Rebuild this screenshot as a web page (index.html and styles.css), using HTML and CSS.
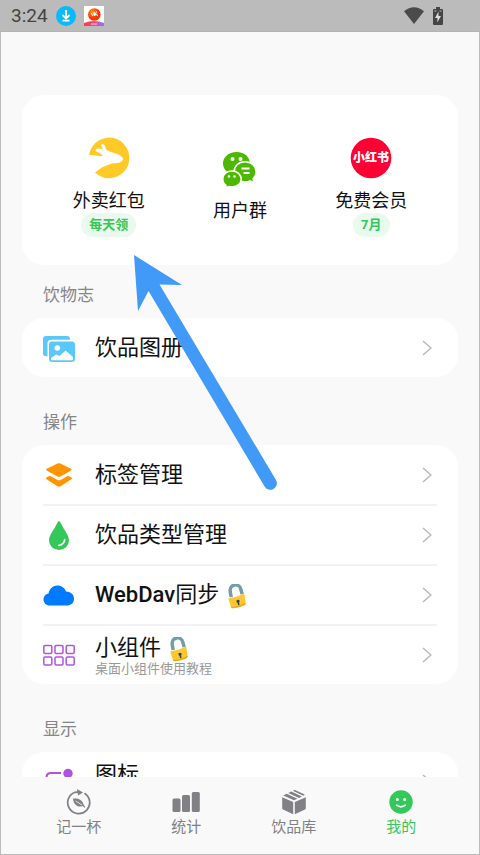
FILE: index.html
```html
<!DOCTYPE html>
<html lang="zh-CN">
<head>
<meta charset="utf-8">
<meta name="viewport" content="width=device-width, initial-scale=1">
<title>我的</title>
<link rel="stylesheet" href="styles.css">
</head>
<body>
<svg class="defs" aria-hidden="true">
  <symbol id="chevron" viewBox="0 0 10 16"><path d="M1 1l8 7-8 7" fill="none" stroke="#b9b9bc" stroke-width="1.500"/></symbol>
  <symbol id="lock" viewBox="0 0 20 26">
    <path d="M4 13.500L3 8.500C1.500-.5 12.500-1.500 14 5.500l1.300 5" fill="none" stroke="#719dab" stroke-width="3.600"/>
    <path d="M2.200 14.500Q9.500 14 16.300 10.300q1.200-.3 1.500 1l1.200 9q-.2 1.300-1.400 1.900-5.800 3.200-12.200 3-1.300-.2-1.700-1.300L1.100 15.800q-.1-1.100 1.100-1.300z" fill="#fdc82f"/>
    <path d="M3.500 23.700q8.500 0 15.300-4.200l.2 1q-.2 1.200-1.400 1.700-5.800 3.200-12.200 3-1.500-.2-1.900-1.500z" fill="#f2a623"/>
    <path d="M9.300 17.300q1.700-1.600 3.200-.4.700 1.300-.3 2.200l.4 2.700-1.400.3-.7-2.700q-1.300-.7-1.200-2.100z" fill="#35434a"/>
  </symbol>
</svg>
<div class="screen">
  <header class="status">
    <span class="time">3:24</span>
    <svg class="status-app" width="20" height="20" viewBox="0 0 20 20"><circle cx="10" cy="10" r="10" fill="#08b9fb"/><path d="M10 4v8M6.500 9l3.500 3.500L13.500 9M6.500 14.700h7" fill="none" stroke="#fff" stroke-width="1.800"/></svg>
    <svg class="status-app" width="20" height="20" viewBox="0 0 20 20">
      <defs>
        <linearGradient id="band"><stop offset="0" stop-color="#ff3c35"/><stop offset=".6" stop-color="#e44d9d"/><stop offset="1" stop-color="#747bff"/></linearGradient>
        <radialGradient id="ball" cx=".35" cy=".3"><stop offset="0" stop-color="#ff9416"/><stop offset="1" stop-color="#f83505"/></radialGradient>
      </defs>
      <path fill="#fff" d="M0 0h20v20H0z"/><path d="M0 17q10-4 20 0v3H0z" fill="url(#band)"/><circle cx="10.300" cy="8.500" r="6.300" fill="url(#ball)"/>
      <path d="M7.500 7l1 3 1.800-4 .3 4 2-4.500M11 8l3 1.500" fill="none" stroke="#fff"/><path d="M7 18h6" stroke="#fff" stroke-opacity=".7"/>
    </svg>
    <span class="status-space"></span>
    <svg width="20" height="17" viewBox="0 0 20 17"><path d="M0 4.200Q10-3.800 20 4.200L10 17z" fill="#4b4b4b"/></svg>
    <svg class="battery" width="10" height="18" viewBox="0 0 10 18"><path d="M3 0h4v2h2q1 0 1 1v14q0 1-1 1H1q-1 0-1-1V3q0-1 1-1h2z" fill="#454545"/><path d="M5.500 4.500L2 11h2.500l-.3 4.500L8 9H5.500z" fill="#ddd"/><path d="M1.500 4h2M6.500 4h2" stroke="#bbb"/></svg>
  </header>

  <main class="content">
    <section class="card shortcuts">
      <a class="shortcut" href="#coupon">
        <svg width="42" height="42" viewBox="0 0 42 42"><path d="M1 18A20.300 20.300 0 1 1 7 35.500Q15 28.500 25 26.200q8 .3 10-3.500.5-2.500-4.500-5.200-7-2-12-4.500l-2-4.800q-1.300-1.800-2.900-.7-1.200.8.200 2.200l1.200 2.400-5-.7q-3.300 0-2.300 2.600Q10 14.800 14.500 18l-.5 1.300Q8 18.500 1 18z" fill="#ffca27"/></svg>
        <span class="shortcut-name">外卖红包</span>
        <span class="pill">每天领</span>
      </a>
      <a class="shortcut" href="#group">
        <svg width="36" height="38" viewBox="0 0 36 38">
          <path d="M14.500 1C6.500 1 1 6.300 1 12.500c0 4 2 6.500 4.500 8.500L5 25l10-1 13-9.500C28.500 6 22.500 1 14.500 1z" fill="#4db800"/>
          <circle cx="10.500" cy="8" r="2" fill="#fff"/><circle cx="18.500" cy="8" r="2" fill="#fff"/>
          <path d="M23 10.800c-6.500 0-11 4.500-11 10.200S16.500 31 23 31c2 0 3.500-.3 5-1l4 1.800-.8-4c2-1.800 3-4 3-6.800 0-5.700-4.700-10.200-11.200-10.200z" fill="#4db800" stroke="#fff" stroke-width="1.600"/>
          <path d="M19.500 17.500h8M21.500 22h6" stroke="#fff" stroke-width="1.800"/>
          <path d="M10 20c-5.300 0-9.200 3.400-9.200 8 0 3 1.200 5 3.200 6.300L3.500 37l3.500-1.500q1.500.5 3 .5c5.300 0 9.200-3.500 9.200-8s-4-8-9.200-8z" fill="#4db800" stroke="#fff" stroke-width="1.500"/>
          <circle cx="7" cy="25.500" r="1.300" fill="#fff"/><circle cx="12.500" cy="25.500" r="1.300" fill="#fff"/>
        </svg>
        <span class="shortcut-name">用户群</span>
      </a>
      <a class="shortcut" href="#member">
        <svg width="42" height="42" viewBox="0 0 42 42"><circle cx="21" cy="21" r="20.300" fill="#ff0034"/><text class="logo-text" x="21" y="25" text-anchor="middle">小红书</text></svg>
        <span class="shortcut-name">免费会员</span>
        <span class="pill">7月</span>
      </a>
    </section>

    <section class="group first">
      <h2>饮物志</h2>
      <div class="card">
        <a class="row" href="#album">
          <svg class="row-icon" viewBox="0 0 32 32"><path d="M0 7q0-3 3-3h21q3 0 3 3v.8H8q-3.500 0-3.500 3.500v13H3q-3 0-3-3z" fill="#5ac8fa"/><rect x="6.800" y="10.200" width="24.400" height="19" rx="2.500" fill="#5ac8fa" stroke="#5ac8fa" stroke-width="1.600"/><path d="M8 26l5-3.500 3.500 1.500 6-5.500L30 25v2.500q0 .7-.7.700H8.700q-.7 0-.7-.7z" fill="#fff"/><circle cx="14.300" cy="16" r="2.800" fill="#fff"/></svg>
          <span class="row-text">饮品图册</span><svg class="chevron"><use href="#chevron"/></svg>
        </a>
      </div>
    </section>

    <section class="group">
      <h2>操作</h2>
      <div class="card">
        <a class="row" href="#tags">
          <svg class="row-icon" viewBox="0 0 32 32"><path d="M14.500 4.500q1.500-.6 3 0L28 9.800q1.500.8 0 1.800l-10.500 5.900q-1.500.6-3 0L3.700 11.600q-1.300-1 0-1.800z" fill="#ff9500"/><path d="M3.500 18.500l3.500-1.700 7 4q2 1 4 0l7-4 3.500 1.700q1 .9 0 1.700l-11 7q-1.500.8-3 0l-11-7q-1-.8 0-1.700z" fill="#ff9500"/></svg>
          <span class="row-text">标签管理</span><svg class="chevron"><use href="#chevron"/></svg>
        </a>
        <a class="row" href="#types">
          <svg class="row-icon" viewBox="0 0 32 32"><path d="M16 2q-1 0-2 2.500C11 11 6 16 6 21.500a10 9.500 0 0 0 20 0C26 16 21 11 18 4.500Q17 2 16 2z" fill="#34c759"/><path d="M21.700 20.500q-.5 5-6 6" fill="none" stroke="#fff" stroke-width="1.700" stroke-linecap="round"/></svg>
          <span class="row-text">饮品类型管理</span><svg class="chevron"><use href="#chevron"/></svg>
        </a>
        <a class="row" href="#webdav">
          <svg class="row-icon" viewBox="0 0 32 32"><path d="M7 26.500c-4 0-6.500-2.700-6.500-6s2.300-5.500 5-6C6.500 9.500 10 6.500 14.500 6.500c4 0 7.300 2.500 8.500 6 4.500 0 8 3 8 7.200 0 4-3 6.800-7.500 6.800z" fill="#007aff"/></svg>
          <span class="row-text"><span class="latin">WebDav</span>同步<svg class="lock"><use href="#lock"/></svg></span><svg class="chevron"><use href="#chevron"/></svg>
        </a>
        <a class="row" href="#widgets">
          <svg class="row-icon" viewBox="0 0 32 32"><g fill="none" stroke="#b154df" stroke-width="1.500"><rect x=".8" y="6.500" width="8" height="8" rx="1.200"/><rect x="12" y="6.500" width="8" height="8" rx="1.200"/><rect x="23.200" y="6.500" width="8" height="8" rx="1.200"/><rect x=".8" y="18" width="8" height="8" rx="1.200"/><rect x="12" y="18" width="8" height="8" rx="1.200"/><rect x="23.200" y="18" width="8" height="8" rx="1.200"/></g></svg>
          <span class="row-text">小组件<svg class="lock"><use href="#lock"/></svg><small>桌面小组件使用教程</small></span><svg class="chevron"><use href="#chevron"/></svg>
        </a>
      </div>
    </section>

    <section class="group">
      <h2>显示</h2>
      <div class="card">
        <a class="row" href="#icons">
          <svg class="row-icon" viewBox="0 0 32 32"><path d="M18 7H8Q3.500 7 3.500 11.500v12Q3.500 28 8 28h12q4.500 0 4.500-4.500V14" fill="none" stroke="#af52de" stroke-width="2"/><circle cx="25" cy="7.500" r="4.700" fill="#af52de"/></svg>
          <span class="row-text upper">图标</span><svg class="chevron"><use href="#chevron"/></svg>
        </a>
      </div>
    </section>
  </main>

  <nav class="tabs">
    <a class="tab" href="#log">
      <svg viewBox="0 0 26 26"><path d="M18.500 4.300A11 11 0 1 1 9 3.300l4-.5" fill="none" stroke="#808085" stroke-width="1.700"/><path d="M11 0l6 3.500-5 3z" fill="#808085"/><path d="M7 9.500c5-.5 9.500 1 10.500 6l1.800 2.700-.8.500-1.800-1.700c-5 2-9.200-1.500-9.700-7.500z" fill="#808085"/><path d="M9.500 12l6.500 4" stroke="#f9f9f9" stroke-width=".8"/></svg>
      <span>记一杯</span>
    </a>
    <a class="tab" href="#stats">
      <svg viewBox="0 0 28 26"><g fill="#808085"><rect x=".5" y="9.500" width="8" height="13.500" rx="1.500"/><rect x="10" y="6" width="8" height="17" rx="1.500"/><rect x="19.800" y="3" width="8" height="20" rx="1.500"/></g></svg>
      <span>统计</span>
    </a>
    <a class="tab" href="#library">
      <svg viewBox="0 0 26 26"><g fill="#808085"><path d="M1.200 8.300l11 4.700v12.200L2 20.500q-.8-.4-.8-1.200zM24.800 8.300l-11 4.700v12.200L24 20.500q.8-.4.800-1.200zM2.200 6.500l3.500-1.700 10.700 4.900L13 11.200zM7.300 4l3-1.500L21 7.400l-3 1.500zM11.800 1.700l1.200-.5q.8-.3 1.500 0l9.300 4.300-1.500 1.200z"/></g></svg>
      <span>饮品库</span>
    </a>
    <a class="tab active" href="#me">
      <svg viewBox="0 0 26 26"><circle cx="13" cy="13" r="11.700" fill="#34c759"/><circle cx="9.300" cy="10.500" r="1.500" fill="#fff"/><circle cx="16.700" cy="10.500" r="1.500" fill="#fff"/><path d="M8.500 16.200q4.500 3.300 9 0" fill="none" stroke="#fff" stroke-width="1.600" stroke-linecap="round"/></svg>
      <span>我的</span>
    </a>
  </nav>
  <svg class="pointer" width="150" height="240" viewBox="0 0 150 240" aria-hidden="true"><path d="M14 5l48 30-22.500-.5L156 230a6.300 6.300 0 0 1-11.400 6.500L28.500 41 18 61z" fill="#4199f8"/></svg>
</div>
</body>
</html>
```
FILE: styles.css
```css
* { box-sizing: border-box; }

body {
  margin: 0;
  font-family: Roboto, "Noto Sans CJK SC", sans-serif;
  color: #111;
  background: #f9f9f9;
}

a { color: inherit; text-decoration: none; }
svg { display: block; flex: none; }
.defs { position: absolute; width: 0; height: 0; }

.screen {
  position: relative;
  display: flex;
  flex-direction: column;
  height: 100vh;
  border: 1px solid #bbb;
  border-top: 0;
  overflow: hidden;
}

.status {
  display: flex;
  align-items: center;
  flex: none;
  gap: 8px;
  height: 32px;
  padding: 0 36px 0 10px;
  background: #bbb;
  border-bottom: 1px solid #b3b3b3;
}
.time { font-size: 19px; color: #444; }
.status-space { flex: 1; }
.battery { margin-left: 1px; }

.content {
  flex: 1;
  min-height: 0;
  padding: 63px 21px 0;
  overflow: hidden;
}

.card { background: #fff; border-radius: 22px; }

.shortcuts {
  display: grid;
  grid-template-columns: repeat(3, 1fr);
  align-items: center;
  height: 170px;
  padding: 14px 21px 0;
}
.shortcut {
  display: flex;
  flex-direction: column;
  align-items: center;
}
.shortcut-name { margin-top: 10px; font-size: 18px; line-height: 24px; }
.pill {
  padding: 0 8px;
  border-radius: 13px;
  background: #e9f9ed;
  color: #34c759;
  font-size: 13px;
  font-weight: 700;
  line-height: 24px;
}
.logo-text { fill: #fff; font-size: 12px; font-weight: 900; }

.group { margin-top: 32px; }
.group.first { margin-top: 17px; }
h2 {
  margin: 0 0 10px;
  padding: 0 21px;
  color: #858589;
  font-size: 17px;
  font-weight: 400;
  line-height: 26px;
}

.row {
  display: flex;
  align-items: center;
  height: 59px;
  margin: 0 21px;
}
.row + .row { height: 60px; border-top: 2px solid #f1f1f7; }
.row-icon { width: 32px; height: 32px; }
.row-text {
  flex: 1;
  margin-left: 20px;
  font-size: 22px;
  line-height: 28px;
}
.row-text.upper { padding-bottom: 14px; }
.latin { font-weight: 500; }
.row-text small {
  display: block;
  color: #999;
  font-size: 13px;
  line-height: 14px;
}
.lock {
  display: inline-block;
  width: 20px;
  height: 25px;
  margin-left: 8px;
  vertical-align: middle;
}
.chevron { width: 10px; height: 16px; margin-right: 5px; }

.tabs {
  display: grid;
  grid-template-columns: repeat(4, 1fr);
  flex: none;
  height: 77px;
  padding: 12px 24px 0;
  background: #f9f9f9;
}
.tab {
  display: flex;
  flex-direction: column;
  align-items: center;
  color: #808085;
  font-size: 15px;
  line-height: 24px;
}
.tab svg { width: 28px; height: 26px; }
.tab.active { color: #34c759; }

.pointer {
  position: absolute;
  top: 250px;
  left: 119px;
  overflow: visible;
}
```
